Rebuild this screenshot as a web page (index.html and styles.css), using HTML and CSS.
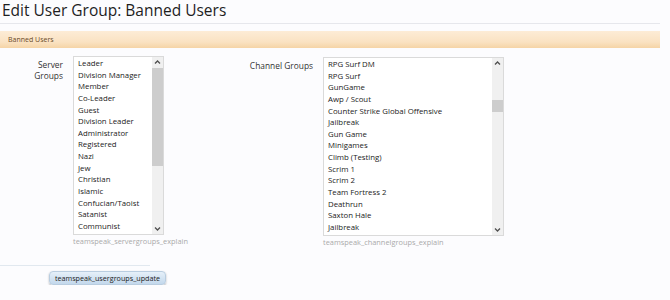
FILE: index.html
```html
<!DOCTYPE html>
<html lang="en">
<head>
    <meta charset="UTF-8">
    <meta name="viewport" content="width=device-width, initial-scale=1.0">
    <title>Edit User Group: Banned Users</title>
    <link rel="stylesheet" href="styles.css">
</head>
<body>
    <div class="page">
        <h1 class="page-title">Edit User Group: Banned Users</h1>

        <div class="section-bar">Banned Users</div>

        <form class="usergroup-form">
            <div class="form-row">
                <!-- server groups -->
                <div class="field field-server">
                    <label class="field-label">Server<br>Groups</label>
                    <div class="field-control">
                        <div class="listbox">
                            <ul class="listbox-items">
                                <li>Leader</li>
                                <li>Division Manager</li>
                                <li>Member</li>
                                <li>Co-Leader</li>
                                <li>Guest</li>
                                <li>Division Leader</li>
                                <li>Administrator</li>
                                <li>Registered</li>
                                <li>Nazi</li>
                                <li>Jew</li>
                                <li>Christian</li>
                                <li>Islamic</li>
                                <li>Confucian/Taoist</li>
                                <li>Satanist</li>
                                <li>Communist</li>
                            </ul>
                            <div class="scrollbar">
                                <svg class="arrow" viewBox="0 0 11 11"><polyline points="3,6.5 5.5,4 8,6.5"/></svg>
                                <div class="track"><div class="thumb thumb-server"></div></div>
                                <svg class="arrow" viewBox="0 0 11 11"><polyline points="3,4.5 5.5,7 8,4.5"/></svg>
                            </div>
                        </div>
                        <p class="explain">teamspeak_servergroups_explain</p>
                    </div>
                </div>

                <!-- channel groups -->
                <div class="field field-channel">
                    <label class="field-label">Channel Groups</label>
                    <div class="field-control">
                        <div class="listbox">
                            <ul class="listbox-items">
                                <li>RPG Surf DM</li>
                                <li>RPG Surf</li>
                                <li>GunGame</li>
                                <li>Awp / Scout</li>
                                <li>Counter Strike Global Offensive</li>
                                <li>Jailbreak</li>
                                <li>Gun Game</li>
                                <li>Minigames</li>
                                <li>Climb (Testing)</li>
                                <li>Scrim 1</li>
                                <li>Scrim 2</li>
                                <li>Team Fortress 2</li>
                                <li>Deathrun</li>
                                <li>Saxton Hale</li>
                                <li>Jailbreak</li>
                            </ul>
                            <div class="scrollbar">
                                <svg class="arrow" viewBox="0 0 11 11"><polyline points="3,6.5 5.5,4 8,6.5"/></svg>
                                <div class="track"><div class="thumb thumb-channel"></div></div>
                                <svg class="arrow" viewBox="0 0 11 11"><polyline points="3,4.5 5.5,7 8,4.5"/></svg>
                            </div>
                        </div>
                        <p class="explain">teamspeak_channelgroups_explain</p>
                    </div>
                </div>
            </div>

            <div class="form-footer">
                <button type="submit" class="btn-update">teamspeak_usergroups_update</button>
            </div>
        </form>
    </div>
</body>
</html>
```

FILE: styles.css
```css
*{
    margin: 0;
    padding: 0;
    box-sizing: border-box;
    font-family: 'Open Sans', 'DejaVu Sans', sans-serif;
}
body{
    background: #fcfcfe;
    color: #222;
}
.page{
    width: 660px;
}
.page-title{
    font-size: 15.5px;
    font-weight: normal;
    line-height: 20px;
    padding: 0 0 3px 2px;
    border-bottom: 1px solid #e6e7ec;
    color: #1e1e1e;
}
.section-bar{
    margin-top: 7px;
    height: 17px;
    line-height: 17px;
    padding-left: 8px;
    font-size: 7px;
    color: #6a4a28;
    background: linear-gradient(#fdecd6, #fae2c2 65%, #f5d4a6);
}

/* form */
.form-row{
    display: flex;
    align-items: flex-start;
    margin-top: 8px;
}
.field{
    display: flex;
    align-items: flex-start;
    gap: 10px;
}
.field-channel{
    margin-top: 1px;
}
.field-label{
    font-size: 8.4px;
    line-height: 11px;
    text-align: right;
    color: #333;
    margin-top: 3px;
}
.field-server .field-label{
    width: 63px;
}
.field-channel .field-label{
    width: 149px;
}
.field-server .field-control{
    width: 91px;
}
.field-channel .field-control{
    width: 181px;
}

/* fake listbox */
.listbox{
    display: flex;
    height: 179px;
    background: #fff;
    border: 1px solid #dadada;
    overflow: hidden;
}
.listbox-items{
    flex: 1;
    list-style: none;
    padding: 1px 0 0 4px;
    font-size: 7.8px;
    line-height: 11.64px;
    color: #222;
    white-space: nowrap;
    overflow: hidden;
}
.scrollbar{
    width: 11px;
    display: flex;
    flex-direction: column;
    background: #f0f0f0;
}
.arrow{
    width: 11px;
    height: 11px;
    flex: none;
}
.arrow polyline{
    fill: none;
    stroke: #505050;
    stroke-width: 1.3;
}
.track{
    flex: 1;
}
.thumb{
    background: #cdcdcd;
}
.thumb-server{
    height: 98px;
}
.thumb-channel{
    margin-top: 31px;
    height: 12px;
}
.explain{
    font-size: 7.4px;
    line-height: 11px;
    margin-top: 1px;
    color: #aaa;
    white-space: nowrap;
}

/* footer */
.form-footer{
    width: 150px;
    margin-top: 17px;
    padding: 5px 0 0 49px;
    border-top: 1px solid #e1e8ef;
}
.btn-update{
    display: block;
    width: 117px;
    height: 14px;
    font-size: 7.2px;
    line-height: 12px;
    color: #222;
    border: 1px solid #b9cde0;
    border-radius: 4px;
    background: linear-gradient(#e6f0f9, #c3d8ec);
    box-shadow: 0 1px 2px rgba(0, 0, 0, .3);
    white-space: nowrap;
    cursor: pointer;
}
```
